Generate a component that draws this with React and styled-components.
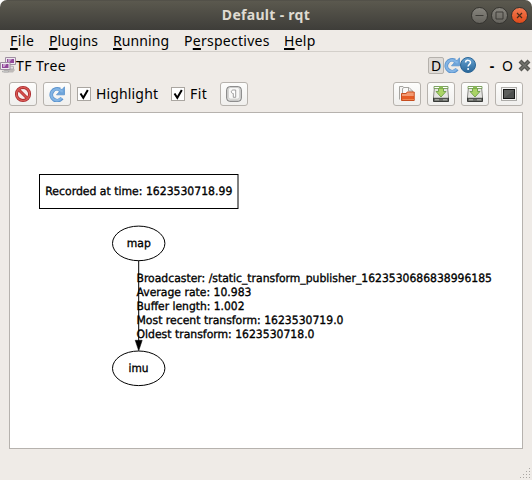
import React from 'react';
import styled, { createGlobalStyle } from 'styled-components';

const Global = createGlobalStyle`
  * { box-sizing: border-box; }
  html, body { margin: 0; padding: 0; background: #fff; }
  body { overflow: hidden; }
  button { font: inherit; color: inherit; margin: 0; padding: 0; }
`;

const Window = styled.div`
  width: 532px;
  height: 480px;
  display: flex;
  flex-direction: column;
  background: #efebe7;
  border-radius: 7px 7px 0 0;
  overflow: hidden;
  font-family: 'Noto Sans', 'Open Sans', sans-serif;
  font-size: 14px;
  line-height: 20px;
  color: #000;
`;

const TitleBar = styled.header`
  height: 30px;
  flex: none;
  display: grid;
  grid-template-columns: 61px 1fr 61px;
  align-items: center;
  background: linear-gradient(#4b4943 0, #5b594f 1px, #59574d 3px, #3e3d39 100%);
`;

const Title = styled.h1`
  grid-column: 2;
  margin: 0;
  text-align: center;
  font-size: 14px;
  font-weight: 700;
  line-height: 30px;
  letter-spacing: ${p => p.$track}px;
  color: #dfdbd2;
`;

const WindowButtons = styled.div`
  display: flex;
  gap: 3px;
`;

const WindowButton = styled.button`
  width: 17px;
  height: 17px;
  border-radius: 50%;
  border: 1px solid #34332f;
  background: ${p => (p.$close ? 'linear-gradient(#f47b52, #df4a1a)' : 'linear-gradient(#86847d, #66645e)')};
  display: flex;
  align-items: center;
  justify-content: center;
`;

const MenuBar = styled.nav`
  height: 22px;
  flex: none;
  display: flex;
  border-bottom: 1px solid #d3cfca;
  padding-left: 10px;
`;

const MenuItem = styled.span`
  width: ${p => p.$w}px;
  line-height: 22px;
  letter-spacing: ${p => p.$track}px;
  white-space: nowrap;
  u {
    text-decoration-thickness: 2px;
    text-underline-offset: 2px;
    text-decoration-skip-ink: none;
  }
`;

const DockTitle = styled.div`
  height: 26px;
  flex: none;
  display: flex;
  align-items: center;
  line-height: 26px;
`;

const DockName = styled.span`
  flex: 1;
  line-height: 27px;
  letter-spacing: ${p => p.$track}px;
`;

const DockActions = styled.div`
  display: flex;
  align-items: center;
  padding-right: 1px;
`;

const DockToggle = styled.button`
  width: 16px;
  height: 17px;
  border: 1px solid #b5b1ac;
  border-radius: 2px;
  background: #dfdbd7;
  line-height: 16px;
  font-size: 14px;
`;

const DockText = styled.button`
  width: ${p => p.$w}px;
  margin-left: ${p => p.$gap}px;
  border: 0;
  background: none;
  line-height: 27px;
  font-weight: ${p => (p.$bold ? 700 : 400)};
`;

const DockClose = styled.span`
  margin-left: 5px;
`;

const ToolBar = styled.div`
  height: 34px;
  flex: none;
  display: flex;
  align-items: flex-start;
  padding: 4px 9px 0;
  gap: 6px;
`;

const Spacer = styled.div`
  flex: 1;
`;

const ToolButton = styled.button`
  width: 28px;
  height: 24px;
  display: flex;
  align-items: center;
  justify-content: center;
  border: 1px solid #b6b2ad;
  border-radius: 3px;
  background: linear-gradient(#fdfdfc, #f0efed);
`;

const CheckLabel = styled.label`
  width: ${p => p.$w}px;
  height: 24px;
  display: flex;
  align-items: center;
  gap: 5px;
  line-height: 24px;
  letter-spacing: ${p => p.$track}px;
  white-space: nowrap;
`;

const CheckBox = styled.span`
  width: 14px;
  height: 14px;
  flex: none;
  display: flex;
  border: 1px solid #aaa6a1;
  background: #fff;
`;

const Canvas = styled.main`
  width: 514px;
  height: 337px;
  flex: none;
  margin-left: 9px;
  border: 1px solid #b6b2ae;
  background: #fff;
`;

const StatusBar = styled.footer`
  flex: 1;
  display: flex;
  justify-content: flex-end;
  align-items: flex-end;
`;

const Graph = styled.svg`
  display: block;
  font-family: 'DejaVu Sans', sans-serif;
  font-size: 11.4px;
  text-rendering: geometricPrecision;
`;

const Icon = styled.svg`
  display: block;
  flex: none;
`;

const TreeIcon = () => (
  <Icon width="16" height="18" viewBox="0 0 16 18">
    <path d="M4 14l9.500-1.500 1.500 1.500-2 2.500H4z" fill="#a5a29f" opacity=".65" />
    <path d="M10 10l3.500.5v2.500H10" fill="#e2dee2" stroke="#aaa3aa" strokeWidth=".8" />
    <path d="M5.500 1.500h10v7h-10z" fill="#f0eaf1" stroke="#9f8fa1" />
    <path d="M7 3h7v4H7z" fill="#91469a" />
    <path d="M8 3h4L9.500 6H8z" fill="#c29bc8" />
    <path d="M.5 6.500h9.500v7H.5z" fill="#f0eaf1" stroke="#9f8fa1" />
    <path d="M2 8h6.500v4H2z" fill="#91469a" />
    <path d="M3 8h3.500L4.500 11H3z" fill="#c7a3cb" />
    <path d="M2.500 15h6v1h-6z" fill="#eee" stroke="#999" strokeWidth=".6" />
  </Icon>
);

const RefreshIcon = () => (
  <Icon width="16" height="16" viewBox="0 0 16 16">
    <path d="M13 12.200A5.900 5.900 0 1 1 11 3.500" fill="none" stroke="#5b93cd" strokeWidth="3.800" />
    <path d="M15.500.8v8H7.500l2.700-2.900-.7-2.900 3.700.5z" fill="#6da4da" stroke="#5b93cd" strokeWidth=".8" strokeLinejoin="round" />
    <path d="M12.500 11.800A5.600 5.600 0 1 1 11 4.100L13.800 5.800" fill="none" stroke="#83b4e4" strokeWidth="2.200" />
  </Icon>
);

const HelpIcon = () => (
  <Icon width="16" height="16" viewBox="0 0 16 16">
    <defs>
      <linearGradient id="help" x2="0" y2="1">
        <stop stopColor="#69a3d2" />
        <stop offset="1" stopColor="#286699" />
      </linearGradient>
    </defs>
    <circle cx="8" cy="8" r="7.500" fill="url(#help)" stroke="#2a6596" />
    <path d="M5.600 5.500c.2-3 5.100-2.700 4.900.1 0 1.700-2.400 1.900-2.400 4" fill="none" stroke="#fff" strokeWidth="1.500" />
    <circle cx="8.100" cy="12" r="1" fill="#fff" />
  </Icon>
);

const CloseIcon = () => (
  <Icon width="13" height="13" viewBox="0 0 13 13">
    <path d="M2 2l9 9M11 2l-9 9" stroke="#595955" strokeWidth="4" />
    <path d="M2.500 2.500l8 8M10.500 2.500l-8 8" stroke="#747570" strokeWidth="1.300" />
  </Icon>
);

const StopIcon = () => (
  <Icon width="18" height="18" viewBox="0 0 18 18">
    <circle cx="9" cy="9" r="6.600" fill="#f6eceb" stroke="#ab2a2e" strokeWidth="3" />
    <path d="M4.500 4.500l9 9" stroke="#b92f31" strokeWidth="3" />
    <circle cx="9" cy="9" r="6.600" fill="none" stroke="#d95a55" strokeWidth="1.400" />
    <path d="M4.500 4.500l9 9" stroke="#d6504d" strokeWidth="1.400" />
  </Icon>
);

const ParagraphIcon = () => (
  <Icon width="16" height="16" viewBox="0 0 16 16">
    <rect x=".7" y=".7" width="14.600" height="14.600" rx="3" fill="#dededc" stroke="#777" />
    <rect x="2.500" y="1.500" width="11" height="11.500" rx="2" fill="#f8f8f7" stroke="#c3c3c1" strokeWidth=".6" />
    <path d="M9.700 4H7.300C4.700 4 4.700 7.500 7.300 7.500v3.800h2.400z" fill="#fff" stroke="#888" strokeWidth=".8" />
  </Icon>
);

const OpenIcon = () => (
  <Icon width="18" height="18" viewBox="0 0 18 18">
    <path d="M1.500 14.500V1.500H5L7.500 4V12" fill="#f5f5f4" stroke="#a6a5a1" />
    <path d="M4.500 11V3.500L6 2.500h5L14.500 6V9" fill="#fafaf9" stroke="#a6a5a1" />
    <path d="M10.500 2.500V6h4" fill="none" stroke="#a6a5a1" />
    <path d="M3.500 15.500V8.500h4.700l1-1.500h7v8.500z" fill="#e55b24" stroke="#c64e20" />
    <path d="M4 9h4.500l1-1.500h6.200v3.500H4z" fill="#f29a72" />
    <path d="M4.500 14.500h11.500" stroke="#f08650" />
  </Icon>
);

const SaveIcon = () => (
  <Icon width="18" height="18" viewBox="0 0 18 18">
    <path d="M2.500 2h13l1 10v4h-15v-4z" fill="#e6e5e2" stroke="#8b8b86" />
    <path d="M1.500 13h15v3.500h-15z" fill="#696b67" stroke="#393b38" />
    <path d="M2 12.500h14" stroke="#c2c3be" />
    <path d="M3 14.800h4m4 0h4" stroke="#b5b7b1" />
    <path d="M2 1.500h14v2H2z" fill="#fff" stroke="#669343" strokeWidth=".8" />
    <path d="M6.500 3.500h5v3H14l-5 5.500-5-5.500h2.500z" fill="#abd465" stroke="#6d9e45" strokeWidth=".9" />
    <path d="M7 1.500h4v2H7z" fill="#8dbb56" />
  </Icon>
);

const ScreenIcon = () => (
  <Icon width="18" height="16" viewBox="0 0 18 16">
    <rect x="1.500" y="1.500" width="15" height="13" fill="#f4f4f3" stroke="#adaca9" />
    <rect x="3.500" y="3.500" width="11" height="9" fill="#4e504f" stroke="#171817" />
    <path d="M4 12V4h10z" fill="#686968" opacity=".6" />
  </Icon>
);

const CheckMark = () => (
  <Icon width="12" height="12" viewBox="0 0 12 12">
    <path d="M2.500 5.500l2.800 4.300L9.800 2" fill="none" stroke="#000" strokeWidth="2" />
  </Icon>
);

const Grip = () => {
  const dots = [[10, 1], [7, 4], [10, 4], [4, 7], [7, 7], [10, 7], [1, 10], [4, 10], [7, 10], [10, 10]];
  return (
    <Icon width="13" height="13" viewBox="0 0 13 13">
      {dots.map(([x, y]) => <rect key={`${x}-${y}`} x={x} y={y} width="1" height="1" fill="#a9a6a2" />)}
    </Icon>
  );
};

const menus = [
  { pre: '', key: 'F', post: 'ile', w: 39, track: 0.5 },
  { pre: '', key: 'P', post: 'lugins', w: 64, track: 0.1 },
  { pre: '', key: 'R', post: 'unning', w: 71, track: 0.1 },
  { pre: 'P', key: 'e', post: 'rspectives', w: 100, track: 0.27 },
  { pre: '', key: 'H', post: 'elp', w: 40, track: 0.25 },
];

const edgeLines = [
  ['Broadcaster: /static_transform_publisher_1623530686838996185', 355.5],
  ['Average rate: 10.983', 115],
  ['Buffer length: 1.002', 108],
  ['Most recent transform: 1623530719.0', 207],
  ['Oldest transform: 1623530718.0', 178],
];

const GraphText = ({ x, y, w, children }) => (
  <text x={x} y={y} textLength={w} lengthAdjust="spacingAndGlyphs" stroke="#000" strokeWidth=".35">{children}</text>
);

export default function App() {
  return (
    <>
      <Global />
      <Window>
        <TitleBar>
          <Title $track={0.3}>Default - rqt</Title>
          <WindowButtons>
            <WindowButton aria-label="Minimize">
              <Icon width="9" height="9"><path d="M.5 4.500h8" stroke="#3c3b37" /></Icon>
            </WindowButton>
            <WindowButton aria-label="Maximize">
              <Icon width="9" height="9"><path d="M1 1h7v7H1z" fill="none" stroke="#3c3b37" /></Icon>
            </WindowButton>
            <WindowButton $close aria-label="Close">
              <Icon width="7" height="7"><path d="M1 1l5 5M6 1l-5 5" stroke="#4a2b18" strokeWidth="1.200" /></Icon>
            </WindowButton>
          </WindowButtons>
        </TitleBar>
        <MenuBar>
          {menus.map(m => (
            <MenuItem key={m.post} $w={m.w} $track={m.track}>{m.pre}<u>{m.key}</u>{m.post}</MenuItem>
          ))}
        </MenuBar>
        <DockTitle>
          <TreeIcon />
          <DockName $track={0.45}>TF Tree</DockName>
          <DockActions>
            <DockToggle>D</DockToggle>
            <RefreshIcon />
            <HelpIcon />
            <DockText $w={8} $gap={12} $bold>-</DockText>
            <DockText $w={11} $gap={6}>O</DockText>
            <DockClose><CloseIcon /></DockClose>
          </DockActions>
        </DockTitle>
        <ToolBar>
          <ToolButton aria-label="Stop"><StopIcon /></ToolButton>
          <ToolButton aria-label="Refresh"><RefreshIcon /></ToolButton>
          <CheckLabel $w={88} $track={0.15}><CheckBox><CheckMark /></CheckBox>Highlight</CheckLabel>
          <CheckLabel $w={43} $track={0.4}><CheckBox><CheckMark /></CheckBox>Fit</CheckLabel>
          <ToolButton aria-label="Fit in view"><ParagraphIcon /></ToolButton>
          <Spacer />
          <ToolButton aria-label="Open"><OpenIcon /></ToolButton>
          <ToolButton aria-label="Save dot"><SaveIcon /></ToolButton>
          <ToolButton aria-label="Save SVG"><SaveIcon /></ToolButton>
          <ToolButton aria-label="Save image"><ScreenIcon /></ToolButton>
        </ToolBar>
        <Canvas>
          <Graph width="512" height="335" viewBox="10 113 512 335">
            <rect x="39.500" y="174.500" width="198.500" height="34" fill="none" stroke="#000" />
            <GraphText x={45.3} y={195.3} w={187}>Recorded at time: 1623530718.99</GraphText>
            <ellipse cx="138.700" cy="243.400" rx="26.200" ry="17.300" fill="none" stroke="#000" />
            <GraphText x={126.800} y={247.400} w={24}>map</GraphText>
            <path d="M138.700 260.700v81" stroke="#000" />
            <path d="M135.200 340.300h7l-3.500 10.500z" stroke="#000" strokeWidth=".5" />
            {edgeLines.map(([t, w], i) => (
              <GraphText key={t} x={136.500} y={282.400 + i * 13.800} w={w}>{t}</GraphText>
            ))}
            <ellipse cx="138.700" cy="368.300" rx="26.200" ry="17.300" fill="none" stroke="#000" />
            <GraphText x={128.500} y={372.400} w={20}>imu</GraphText>
          </Graph>
        </Canvas>
        <StatusBar><Grip /></StatusBar>
      </Window>
    </>
  );
}
